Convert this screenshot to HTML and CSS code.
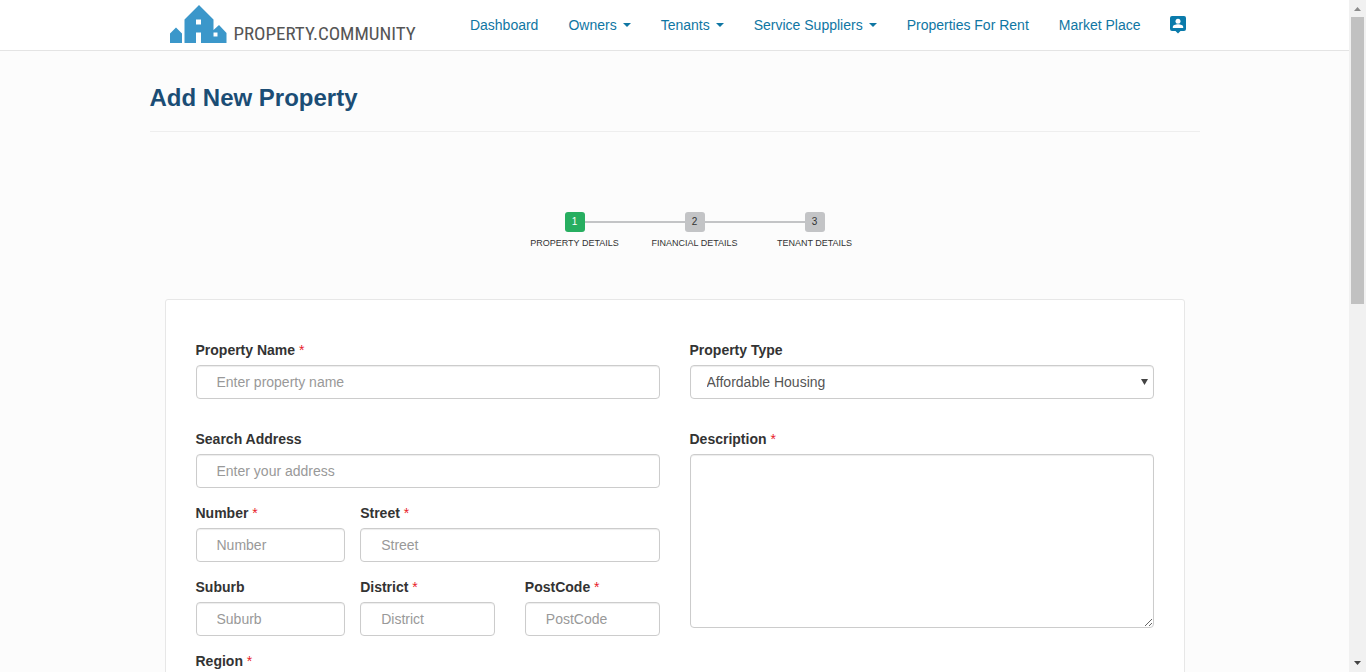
FILE: index.html
```html
<!DOCTYPE html>
<html lang="en">
<head>
<meta charset="utf-8">
<meta name="viewport" content="width=device-width, initial-scale=1">
<title>Add New Property</title>
<link rel="stylesheet" href="styles.css">
</head>
<body>
<div class="window">
  <div class="page">
    <header class="navbar">
      <div class="navbar-inner">
        <a class="brand" href="#">
          <svg class="brand-mark" width="57" height="38" viewBox="0 0 57 38" aria-hidden="true">
            <path fill="#3b97ca" fill-rule="evenodd" d="M0 38V28.500L6 22.500L12 28.500V38ZM14.500 38V14.500L29 0L43.500 14.500V25L49 20L56.500 28V38H31V27.500H26V38ZM26 14.500V19.500H31V14.500ZM43.500 27.500V31.500H47.500V27.500Z"/>
          </svg>
          <span class="brand-text">PROPERTY.COMMUNITY</span>
        </a>
        <nav class="menu">
          <a href="#">Dashboard</a>
          <a href="#">Owners <span class="caret"></span></a>
          <a href="#">Tenants <span class="caret"></span></a>
          <a href="#">Service Suppliers <span class="caret"></span></a>
          <a href="#">Properties For Rent</a>
          <a href="#">Market Place</a>
          <a class="account" href="#" aria-label="Account">
            <svg width="16" height="18" viewBox="0 0 16 18" aria-hidden="true">
              <path fill="#0b7bab" d="M2 0H14Q16 0 16 2V13Q16 15 14 15H10.500L8 17.500L5.500 15H2Q0 15 0 13V2Q0 0 2 0Z"/>
              <circle cx="8" cy="5.200" r="2.500" fill="#fff"/>
              <path fill="#fff" d="M2.800 12V11C2.800 9.200 5.500 8.300 8 8.300S13.200 9.200 13.200 11V12Z"/>
            </svg>
          </a>
        </nav>
      </div>
    </header>

    <main class="container">
      <h1 class="title">Add New Property</h1>

      <ol class="steps">
        <li class="step active"><span class="step-number">1</span>Property Details</li>
        <li class="step"><span class="step-number">2</span>Financial Details</li>
        <li class="step"><span class="step-number">3</span>Tenant Details</li>
      </ol>

      <form class="card">
        <div class="columns">
          <div class="field">
            <label for="name">Property Name <span class="required">*</span></label>
            <input class="control" id="name" type="text" placeholder="Enter property name">
          </div>
          <div class="field">
            <label for="type">Property Type</label>
            <div class="select-wrap">
              <select class="control" id="type"><option>Affordable Housing</option></select>
              <svg class="select-arrow" width="7" height="6" viewBox="0 0 7 6" aria-hidden="true"><path fill="#444" d="M0 0H7L3.500 6Z"/></svg>
            </div>
          </div>
        </div>

        <div class="columns">
          <div class="stack">
            <div class="field">
              <label for="search">Search Address</label>
              <input class="control" id="search" type="text" placeholder="Enter your address">
            </div>
            <div class="address-row">
              <div class="field">
                <label for="number">Number <span class="required">*</span></label>
                <input class="control" id="number" type="text" placeholder="Number">
              </div>
              <div class="field">
                <label for="street">Street <span class="required">*</span></label>
                <input class="control" id="street" type="text" placeholder="Street">
              </div>
            </div>
            <div class="address-row">
              <div class="field">
                <label for="suburb">Suburb</label>
                <input class="control" id="suburb" type="text" placeholder="Suburb">
              </div>
              <div class="columns">
                <div class="field">
                  <label for="district">District <span class="required">*</span></label>
                  <input class="control" id="district" type="text" placeholder="District">
                </div>
                <div class="field">
                  <label for="postcode">PostCode <span class="required">*</span></label>
                  <input class="control" id="postcode" type="text" placeholder="PostCode">
                </div>
              </div>
            </div>
            <div class="field">
              <label for="region">Region <span class="required">*</span></label>
              <input class="control" id="region" type="text" placeholder="Region">
            </div>
          </div>
          <div class="field">
            <label for="description">Description <span class="required">*</span></label>
            <textarea class="control description" id="description"></textarea>
          </div>
        </div>
      </form>
    </main>
  </div>

  <div class="scrollbar" aria-hidden="true">
    <svg width="7" height="4" viewBox="0 0 7 4"><path fill="#8b8b8b" d="M0 4L3.500 0L7 4Z"/></svg>
    <div class="scroll-track"><div class="scroll-thumb"></div></div>
    <svg width="7" height="4" viewBox="0 0 7 4"><path fill="#444" d="M0 0H7L3.500 4Z"/></svg>
  </div>
</div>
</body>
</html>
```
FILE: styles.css
```css
* { box-sizing: border-box; }

body {
  margin: 0;
  background: #fcfcfc;
  color: #333;
  font: 14px/20px "Liberation Sans", Arial, sans-serif;
}

.window { display: flex; height: 100vh; }

.page {
  flex: 1;
  min-width: 0;
  overflow: hidden auto;
  scrollbar-width: none;
}

.navbar { background: #fff; border-bottom: 1px solid #e4e4e4; }

.navbar-inner {
  display: flex;
  align-items: center;
  max-width: 1050px;
  min-height: 50px;
  margin: 0 auto;
  padding: 0 0 0 20px;
}

.brand {
  display: flex;
  align-items: flex-end;
  gap: 7px;
  width: 286px;
  padding-bottom: 2px;
  text-decoration: none;
}

.brand-mark { flex: none; }

.brand-text {
  color: #555;
  font: 19px/18px "Roboto Condensed", "Liberation Sans Narrow", Roboto, sans-serif;
}

.menu { display: flex; align-items: center; white-space: nowrap; }

.menu a {
  display: flex;
  align-items: center;
  gap: 6px;
  padding: 15px;
  color: #0f76a3;
  text-decoration: none;
}

.menu .account { padding: 14px; }

.caret {
  border: 4px solid transparent;
  border-top-color: currentColor;
  border-bottom: 0;
}

.container { max-width: 1050px; margin: 0 auto; }

.title {
  margin: 0;
  padding: 32px 0 18px;
  border-bottom: 1px solid #eee;
  color: #1b4d75;
  font-size: 24px;
  line-height: 30px;
}

.steps {
  display: flex;
  justify-content: center;
  margin: 80px 0 50px;
  padding: 0 0 0 40px;
  list-style: none;
}

.step {
  position: relative;
  display: flex;
  flex-direction: column;
  align-items: center;
  gap: 5px;
  width: 120px;
  font-size: 9px;
  line-height: 12px;
  text-transform: uppercase;
}

.step + .step::before {
  content: "";
  position: absolute;
  top: 9px;
  right: 50%;
  width: 100%;
  height: 2px;
  background: #c3c4c6;
}

.step-number {
  position: relative;
  z-index: 1;
  width: 20px;
  border-radius: 3px;
  background: #c3c4c6;
  font-size: 10px;
  line-height: 20px;
  text-align: center;
}

.active .step-number { background: #27ae60; color: #fff; }
.active { z-index: 1; }

.card {
  display: grid;
  gap: 30px;
  margin: 0 15px 40px;
  padding: 40px 30px;
  border: 1px solid #e7e7e7;
  border-radius: 3px;
  background: #fff;
}

.columns {
  display: grid;
  grid-template-columns: 1fr 1fr;
  gap: 30px;
}

.stack { display: grid; gap: 15px; }

.address-row {
  display: grid;
  grid-template-columns: 1fr 2fr;
  gap: 15px;
}

.field { min-width: 0; }

label { display: block; margin-bottom: 5px; font-weight: bold; }

.required { color: #e8202a; font-weight: normal; }

.control {
  display: block;
  width: 100%;
  height: 34px;
  margin: 0;
  padding: 6px 20px;
  border: 1px solid #ccc;
  border-radius: 4px;
  background: #fff;
  box-shadow: inset 0 1px 1px rgba(0, 0, 0, 0.075);
  color: #555;
  font: inherit;
}

.control::placeholder { color: #999; opacity: 1; }

.select-wrap { position: relative; }

select.control { padding: 6px 16px; appearance: none; }

.select-arrow {
  position: absolute;
  top: 14px;
  right: 6px;
  pointer-events: none;
}

.description { height: 174px; resize: both; }

.scrollbar {
  display: flex;
  flex-direction: column;
  align-items: center;
  gap: 6px;
  width: 17px;
  padding: 7px 2px;
  background: #f1f1f1;
}

.scrollbar svg { flex: none; }

.scroll-track { flex: 1; width: 100%; }

.scroll-thumb { height: 45%; background: #c1c1c1; }
```
